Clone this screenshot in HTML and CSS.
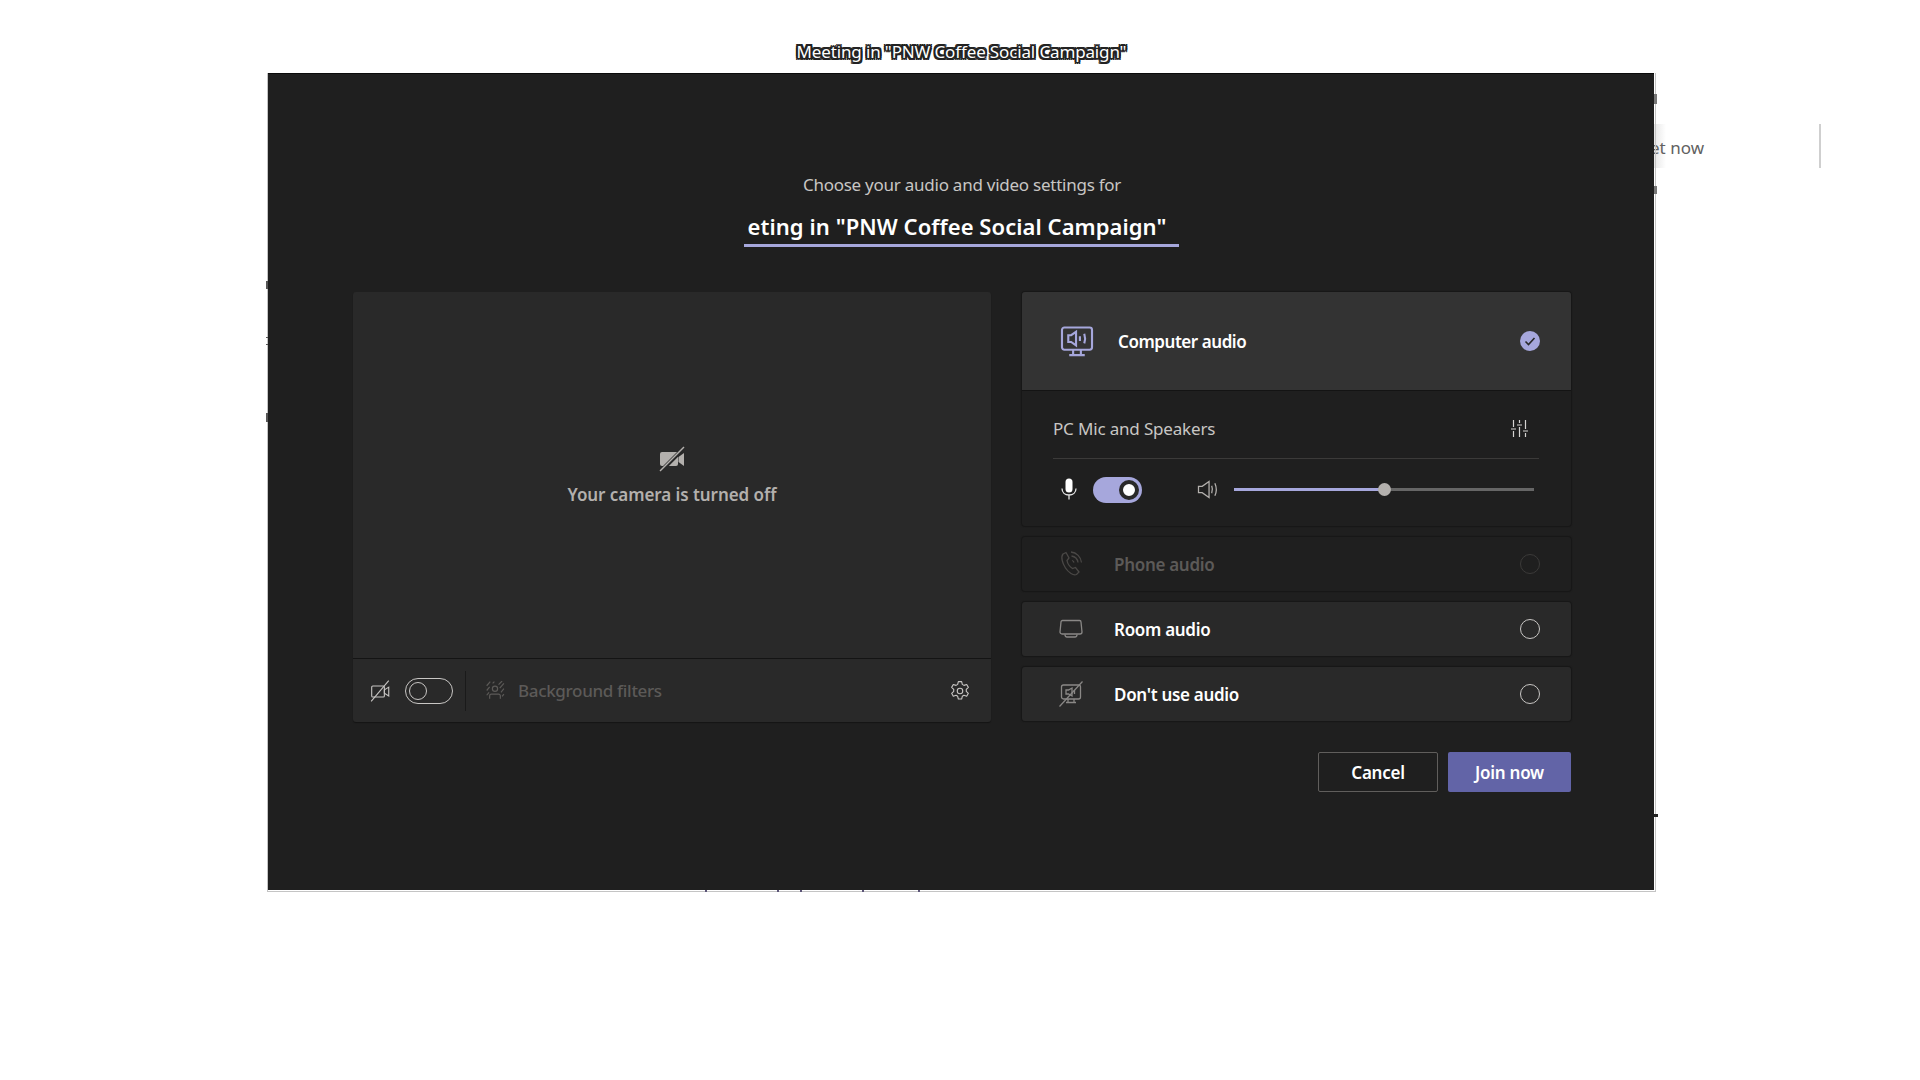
FILE: index.html
```html
<!DOCTYPE html>
<html lang="en">
<head>
<meta charset="utf-8">
<title>Meeting</title>
<link rel="stylesheet" href="styles.css">
</head>
<body>
<div class="backdrop">
  <span class="back-fade"></span>
  <span class="back-now">et now</span>
  <span class="back-rule"></span>
  <span class="back-edge"></span>
  <span class="back-tick t1"></span>
  <span class="back-tick t2"></span>
  <span class="back-tick t3"></span>
  <span class="back-tick t4"></span>
  <span class="back-tick t5"></span>
  <span class="back-mark m1"></span>
  <span class="back-mark m2"></span>
  <span class="back-mark m3"></span>
  <span class="back-mark m4"></span>
  <span class="back-mark m5"></span>
  <span class="back-mark m6"></span>
  <span class="back-mark m7"></span>
</div>
<header class="window-title"><span>Meeting in "PNW Coffee Social Campaign"</span></header>
<main class="dialog">
  <p class="prompt">Choose your audio and video settings for</p>
  <div class="name-field"><div class="name-clip"><span class="name-text">Meeting in "PNW Coffee Social Campaign"</span></div></div>
  <div class="columns">
    <section class="video-card">
      <div class="video-area">
        <svg class="cam-big" width="28" height="26" viewBox="0 0 26 26"><path d="M3 6h15a2 2 0 0 1 1 .4V18a2 2 0 0 1-2 2H3a2 2 0 0 1-2-2V8a2 2 0 0 1 2-2z" fill="#b3b0ad"/><path d="M19.500 11l5.500-4v13l-5.500-4z" fill="#b3b0ad"/><path d="M2 25L25 2" stroke="#292929" stroke-width="4"/><path d="M1 25L25 1" stroke="#b3b0ad" stroke-width="1.5"/></svg>
        <p class="cam-off">Your camera is turned off</p>
      </div>
      <div class="video-bar">
        <svg class="bar-cam" width="21" height="22" viewBox="0 0 18 20" fill="none" stroke="#c8c6c4" stroke-width="1"><path d="M2 5.500h9.500a1 1 0 0 1 1 1v8a1 1 0 0 1-1 1H2a1 1 0 0 1-1-1v-8a1 1 0 0 1 1-1z"/><path d="M12.500 9l4-2.500v8l-4-2.500z"/><path d="M.5 19.500L16.500.5"/></svg>
        <span class="toggle-off"><i></i></span>
        <span class="bar-sep"></span>
        <svg class="bar-filter" width="20" height="19" viewBox="0 0 16 16" fill="none" stroke="#5c5a58" stroke-width="1"><circle cx="8" cy="6.500" r="2.200"/><path d="M3.500 15v-2.500a1.500 1.500 0 0 1 1.500-1.500h6a1.500 1.500 0 0 1 1.500 1.500V15M1 4l3-3.500M1 8l2.500-3M1 12l2-2.500M6 2l1.500-1.500M11 3l3-3M12 6l3.500-4M13 9.500l2.500-3M14 13l1.500-2"/></svg>
        <span class="filter-label">Background filters</span>
        <svg class="bar-gear" width="22" height="22" viewBox="0 0 20 20" fill="none" stroke="#c8c6c4" stroke-width="1"><circle cx="10" cy="10" r="2.500"/><path d="M8.500 1.500h3l.6 2.500 1.500.9 2.500-.8 1.500 2.600-1.900 1.800v1.800l1.900 1.800-1.500 2.600-2.500-.8-1.500.9-.6 2.500h-3l-.6-2.500-1.500-.9-2.500.8-1.500-2.600 1.900-1.800V8.500L2.400 6.700l1.500-2.600 2.500.8 1.500-.9z" stroke-linejoin="round"/></svg>
      </div>
    </section>
    <section class="audio-col">
      <div class="audio-card">
        <div class="audio-head">
          <svg class="head-icon" width="36" height="31" viewBox="0 0 34 32" fill="none" stroke="#a6a7dc" stroke-width="2.200"><rect x="1.500" y="1.500" width="31" height="23" rx="2.500"/><path d="M13 24v5M21 24v5M9 30h16"/><path d="M8 9.500h3l5-3.500v14l-5-3.500H8z"/><path d="M20 10.500v5M24.500 8c1 3 1 7 0 10"/></svg>
          <span class="head-label">Computer audio</span>
          <svg class="check" width="20" height="20" viewBox="0 0 20 20"><circle cx="10" cy="10" r="10" fill="#a6a7dc"/><path d="M5.500 10.500l3 3 6-6.500" fill="none" stroke="#292929" stroke-width="1.600"/></svg>
        </div>
        <div class="audio-body">
          <div class="device-row">
            <span class="device-name">PC Mic and Speakers</span>
            <svg width="19" height="17" viewBox="0 0 18 17" fill="none" stroke="#d6d4d2" stroke-width="1.200"><path d="M3 0v7M3 11v6M9 0v3M9 7v10M15 0v9M15 13v4M.5 9h5M6.500 5h5M12.500 11h5"/></svg>
          </div>
          <div class="control-row">
            <svg class="mic" width="16" height="23" viewBox="0 0 16 22"><rect x="4.500" y="0" width="7" height="14" rx="3.500" fill="#fff"/><path d="M1 10c0 4 3 6.500 7 6.500s7-2.500 7-6.500M8 16.500V21" fill="none" stroke="#e6e6e6" stroke-width="1.300"/></svg>
            <span class="toggle-on"><i></i></span>
            <svg class="speaker" width="22" height="19" viewBox="0 0 20 18" fill="none" stroke="#b3b0ad" stroke-width="1.200"><path d="M1 6h3.500L11 1.500v15L4.500 12H1z"/><path d="M13.500 5.500c1 2.500 1 4.500 0 7M16.500 3c1.800 4 1.800 8 0 12"/></svg>
            <span class="slider"><b></b><i></i></span>
          </div>
        </div>
      </div>
      <div class="option disabled">
        <svg class="opt-icon" width="24" height="26" viewBox="0 0 24 26" fill="none" stroke="#4a4846" stroke-width="1.300"><path d="M4 3l3-1.500 3 5.500-2 2.500c.5 3 2.500 6 5.500 8l3-1 3.500 4.500-2.500 2.500c-3 1.500-8-2-11-6.500S1.500 6 4 3z"/><path d="M12 1c5.500.5 10 5 10.500 10.500M12.500 5c3.500.5 6 3 6.500 6.500M13 9.500c1 .3 1.800 1 2 2"/></svg>
        <span class="opt-label">Phone audio</span>
        <span class="radio"></span>
      </div>
      <div class="option">
        <svg class="opt-icon" width="24" height="20" viewBox="0 0 24 20" fill="none" stroke="#8a8886" stroke-width="1.300"><path d="M3.500 1.500h17a1.500 1.500 0 0 1 1.500 1.500l1 10a2 2 0 0 1-2 2H3a2 2 0 0 1-2-2l1-10a1.500 1.500 0 0 1 1.500-1.500z"/><path d="M6 15.500c0 1.500.5 2.500 2 2.500h8c1.500 0 2-1 2-2.500"/></svg>
        <span class="opt-label">Room audio</span>
        <span class="radio"></span>
      </div>
      <div class="option">
        <svg class="opt-icon" width="24" height="26" viewBox="0 0 24 26" fill="none" stroke="#8a8886" stroke-width="1.300"><rect x="2.500" y="4" width="19" height="14" rx="2"/><path d="M9 18v3M15 18v3M7 21.500h10"/><path d="M7 9h2.500L13 7v8l-3.500-2H7zM15.500 9v4"/><path d="M.5 25.500L23.500.5" stroke-width="1.200"/></svg>
        <span class="opt-label">Don't use audio</span>
        <span class="radio"></span>
      </div>
    </section>
  </div>
  <div class="actions">
    <button class="btn btn-cancel">Cancel</button>
    <button class="btn btn-join">Join now</button>
  </div>
</main>
</body>
</html>
```
FILE: styles.css
```css
* { box-sizing: border-box; }
html, body { margin: 0; height: 1080px; overflow: hidden; }
body {
  position: relative;
  background: #fff;
  font-family: "Noto Sans", "Open Sans", sans-serif;
  color: #fff;
}
.backdrop { position: absolute; inset: 0; }
.back-now { position: absolute; left: 1604px; top: 136px; width: 100px; text-align: right; color: #616161; font-size: 17px; line-height: 24px; }
.back-fade { position: absolute; left: 1654px; top: 124px; width: 12px; height: 44px; background: linear-gradient(90deg, #e6e6e6, #fff); }
.back-rule { position: absolute; left: 1819px; top: 124px; width: 2px; height: 44px; background: #cfcfcf; }
.back-edge { position: absolute; left: 267px; top: 73px; width: 1389px; height: 819px; border: 1px solid #c4c4c4; border-top: 0; }
.back-tick { position: absolute; top: 889px; width: 2px; height: 3px; background: #5b5478; }
.t1 { left: 705px; }
.t2 { left: 777px; }
.t3 { left: 800px; }
.t4 { left: 862px; }
.t5 { left: 918px; }
.back-mark { position: absolute; width: 2px; background: #555; }
.m1 { left: 266px; top: 281px; height: 8px; }
.m2 { left: 266px; top: 337px; height: 1px; }
.m3 { left: 266px; top: 344px; height: 1px; }
.m4 { left: 266px; top: 413px; height: 9px; }
.m5 { left: 1654px; top: 94px; height: 10px; width: 3px; background: #777; }
.m6 { left: 1654px; top: 186px; height: 8px; width: 3px; background: #777; }
.m7 { left: 1654px; top: 814px; height: 3px; width: 4px; background: #222; }

.window-title { position: relative; height: 73px; padding-top: 40px; text-align: center; padding-left: 3px; font-size: 17px; line-height: 24px; letter-spacing: -.14px; color: #fff; }
.window-title span { text-shadow: 1px 0 0 #222, -1px 0 0 #222, 0 1px 0 #222, 0 -1px 0 #222, 2px 0 0 #222, -2px 0 0 #222, 0 2px 0 #222, 0 -2px 0 #222, 1px 1px 0 #222, -1px -1px 0 #222, 1px -1px 0 #222, -1px 1px 0 #222, 2px 2px 0 #222, -2px -2px 0 #222, 2px -2px 0 #222, -2px 2px 0 #222; }

.dialog { position: relative; width: 1386px; height: 817px; margin-left: 268px; background: #1f1f1f; border-top: 1px solid #0a0a0a; padding: 0 83px 0 85px; display: flex; flex-direction: column; }
.prompt { margin: 100px 0 0; height: 22px; line-height: 22px; text-align: center; font-size: 17px; color: #c8c6c4; letter-spacing: -.25px; }
.name-field { align-self: center; margin: 11px 0 0 -2px; width: 435px; height: 40px; padding: 0 12px 0 4px; display: flex; justify-content: flex-end; border-bottom: 3px solid #a6a7dc; white-space: nowrap; }
.name-clip { width: 419px; display: flex; justify-content: flex-end; overflow: hidden; }
.name-text { flex: none; font-size: 22px; font-weight: 600; line-height: 38px; letter-spacing: .06px; }

.columns { display: flex; gap: 31px; margin-top: 45px; height: 430px; }
.video-card { width: 638px; background: #292929; box-shadow: 0 1px 1px #141414; border-radius: 3px; display: flex; flex-direction: column; }
.video-area { height: 367px; border-bottom: 1px solid #141414; display: flex; flex-direction: column; align-items: center; padding-top: 154px; }
.cam-big { display: block; }
.cam-off { margin: 12px 0 0; font-size: 17px; font-weight: 600; line-height: 22px; color: #b3b0ad; letter-spacing: -.06px; }
.video-bar { flex: 1; display: flex; align-items: center; padding: 0 20px 0 17px; }
.bar-cam { flex: none; }
.toggle-off { flex: none; width: 48px; height: 26px; margin-left: 14px; border: 1px solid #c8c6c4; border-radius: 13px; display: flex; align-items: center; padding-left: 3px; }
.toggle-off i { width: 18px; height: 18px; border: 1px solid #c8c6c4; border-radius: 50%; }
.bar-sep { flex: none; width: 1px; height: 40px; background: #1a1a1a; margin: 0 19px 0 12px; }
.bar-filter { flex: none; }
.filter-label { flex: 1; margin-left: 13px; font-size: 17px; font-weight: 500; color: #5c5a58; letter-spacing: -.33px; }
.bar-gear { flex: none; }

.audio-col { width: 549px; display: flex; flex-direction: column; gap: 11px; }
.audio-card { height: 234px; background: #1f1f1f; box-shadow: 0 0 1px 1px #171717; border-radius: 3px; }
.audio-head { height: 99px; background: #333; border-bottom: 1px solid #141414; display: flex; align-items: center; padding: 0 31px 0 37px; border-radius: 3px 3px 0 0; }
.head-icon { flex: none; }
.head-label { flex: 1; margin-left: 23px; font-size: 17px; font-weight: 600; letter-spacing: -.45px; }
.check { flex: none; }
.audio-body { padding: 0 32px 0 31px; }
.device-row { height: 68px; padding: 8px 10px 0 0; border-bottom: 1px solid #3b3a39; display: flex; justify-content: space-between; align-items: center; }
.device-name { font-size: 17px; color: #c8c6c4; letter-spacing: -.17px; }
.control-row { height: 61px; display: flex; align-items: center; }
.mic { flex: none; margin-left: 8px; }
.toggle-on { flex: none; width: 49px; height: 26px; margin-left: 16px; background: #a6a7dc; border-radius: 13px; display: flex; align-items: center; justify-content: flex-end; padding-right: 3px; }
.toggle-on i { width: 20px; height: 20px; background: #fff; border: 4px solid #292929; border-radius: 50%; }
.speaker { flex: none; margin-left: 55px; }
.slider { position: relative; flex: none; width: 300px; height: 3px; margin-left: 15px; background: #666; }
.slider b { display: block; width: 150px; height: 3px; background: #a6a7dc; }
.slider i { position: absolute; left: 144px; top: -5px; width: 13px; height: 13px; border-radius: 50%; background: #b3b0ad; }

.option { height: 54px; background: #292929; box-shadow: 0 0 1px 1px #171717; border-radius: 3px; display: flex; align-items: center; padding: 0 31px 1px 37px; }
.option.disabled { background: #1f1f1f; }
.opt-icon { flex: none; width: 24px; }
.opt-label { flex: 1; margin: 2px 0 0 31px; font-size: 17px; font-weight: 600; letter-spacing: -.3px; }
.disabled .opt-label { color: #5c5a58; }
.radio { flex: none; width: 20px; height: 20px; border: 1px solid #c8c6c4; border-radius: 50%; }
.disabled .radio { border-color: #3b3a39; }

.actions { display: flex; justify-content: flex-end; gap: 10px; margin-top: 30px; }
.btn { height: 40px; border-radius: 2px; font: 600 17px/1 "Noto Sans", "Open Sans", sans-serif; letter-spacing: -.25px; color: #fff; padding: 0; }
.btn-cancel { width: 120px; background: transparent; border: 1px solid #605e5c; }
.btn-join { width: 123px; background: #6264a7; border: 0; }
```
